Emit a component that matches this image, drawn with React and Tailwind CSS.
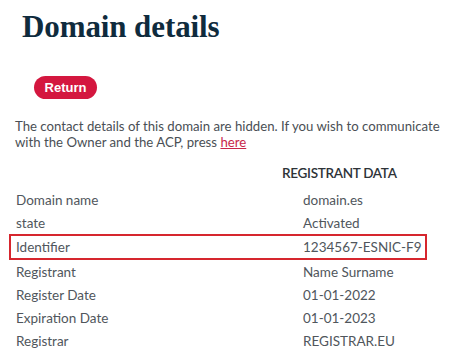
export default function App() {
  const rows = [
    ["Domain name", "domain.es"],
    ["state", "Activated"],
    ["Identifier", "1234567-ESNIC-F9", true],
    ["Registrant", "Name Surname"],
    ["Register Date", "01-01-2022"],
    ["Expiration Date", "01-01-2023"],
    ["Registrar", "REGISTRAR.EU"],
  ];
  return (
    <div className="w-[450px] h-[357px] bg-white overflow-hidden" style={{ fontFamily: "Lato, 'Noto Sans', sans-serif" }}>
      <h1 className="pl-[22px] pt-[9px] text-[31px] leading-[36px] font-bold text-[#0f2b3d] tracking-[-0.1px]" style={{ fontFamily: "'Liberation Serif', 'DejaVu Serif', serif" }}>
        Domain details
      </h1>
      <div className="pl-[34px] mt-[29px]">
        <button className="w-[63px] h-[23px] rounded-full bg-[#d4173f] text-white text-[13px] font-bold" style={{ fontFamily: "'Liberation Sans', Arial, sans-serif" }}>
          Return
        </button>
      </div>
      <p className="pl-[15px] w-[450px] mt-[19px] text-[13.2px] leading-[16px] text-[#4a4f55] whitespace-nowrap">
        The contact details of this domain are hidden. If you wish to communicate
        <br />
        with the Owner and the ACP, press{" "}
        <span className="text-[#c8264a] underline">here</span>
      </p>
      <div className="pl-[282px] mt-[15px] text-[13.5px] leading-[16px] font-semibold text-[#2e3338] tracking-[-0.3px]">REGISTRANT DATA</div>
      <div className="ml-[9px] w-[418px] mt-[7px] flex flex-col">
        {rows.map(([k, v, hl]) => (
          <div
            key={k}
            className={
              "flex items-center text-[13.5px] leading-[16px] text-[#50565c] " +
              (hl ? "h-[26px] border-2 border-[#d6262e] pl-[5px]" : "h-[23px] pl-[7px]")
            }
          >
            <span className="w-[287px] shrink-0">{k}</span>
            <span>{v}</span>
          </div>
        ))}
      </div>
    </div>
  );
}
